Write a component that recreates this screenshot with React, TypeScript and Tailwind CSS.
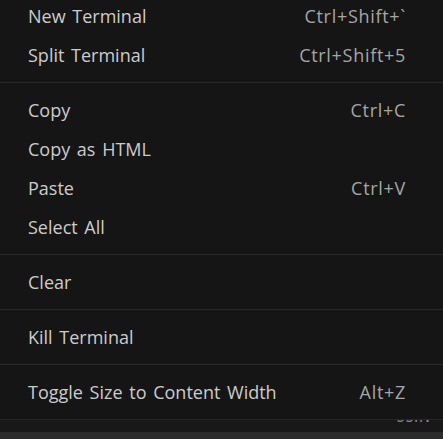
type Item = { label: string; keys?: string };

const SECTIONS: Item[][] = [
  [{ label: 'New Terminal', keys: 'Ctrl+Shift+`' }, { label: 'Split Terminal', keys: 'Ctrl+Shift+5' }],
  [
    { label: 'Copy', keys: 'Ctrl+C' },
    { label: 'Copy as HTML' },
    { label: 'Paste', keys: 'Ctrl+V' },
    { label: 'Select All' },
  ],
  [{ label: 'Clear' }],
  [{ label: 'Kill Terminal' }],
  [{ label: 'Toggle Size to Content Width', keys: 'Alt+Z' }],
];

function Row({ label, keys }: Item) {
  return (
    <div className="flex h-[39px] items-center justify-between pb-[2px] pl-[28px] pr-[37px]">
      <span className="text-[#cccccc] [word-spacing:2px]">{label}</span>
      {keys && <span className="tracking-[0.7px] text-[#a6a6a6]">{keys}</span>}
    </div>
  );
}

export default function App() {
  return (
    <div
      className="flex h-[439px] w-[443px] flex-col overflow-hidden bg-[#181818] text-[18px] leading-none"
      style={{ fontFamily: '"Open Sans", "Noto Sans", sans-serif' }}
    >
      <div className="-mt-[3px] flex flex-col bg-[#151515]">
        {SECTIONS.map((items, i) => (
          <div key={i} className="flex flex-col">
            {i > 0 && <div className="mb-[8px] h-px bg-[#2a2a2a]" />}
            {items.map((it) => (
              <Row key={it.label} {...it} />
            ))}
            <div className="h-[7px]" />
          </div>
        ))}
        <div className="h-px bg-[#262626]" />
      </div>
      <div className="h-[12px] overflow-hidden">
        <div
          className="-mt-[10px] whitespace-nowrap pl-[396px] text-[15px] text-[#8a8a8a]"
          style={{ fontFamily: '"DejaVu Sans Mono", monospace' }}
        >
          ssh: t
        </div>
      </div>
      <div className="flex-1 bg-[#2b2b2b]" />
    </div>
  );
}
